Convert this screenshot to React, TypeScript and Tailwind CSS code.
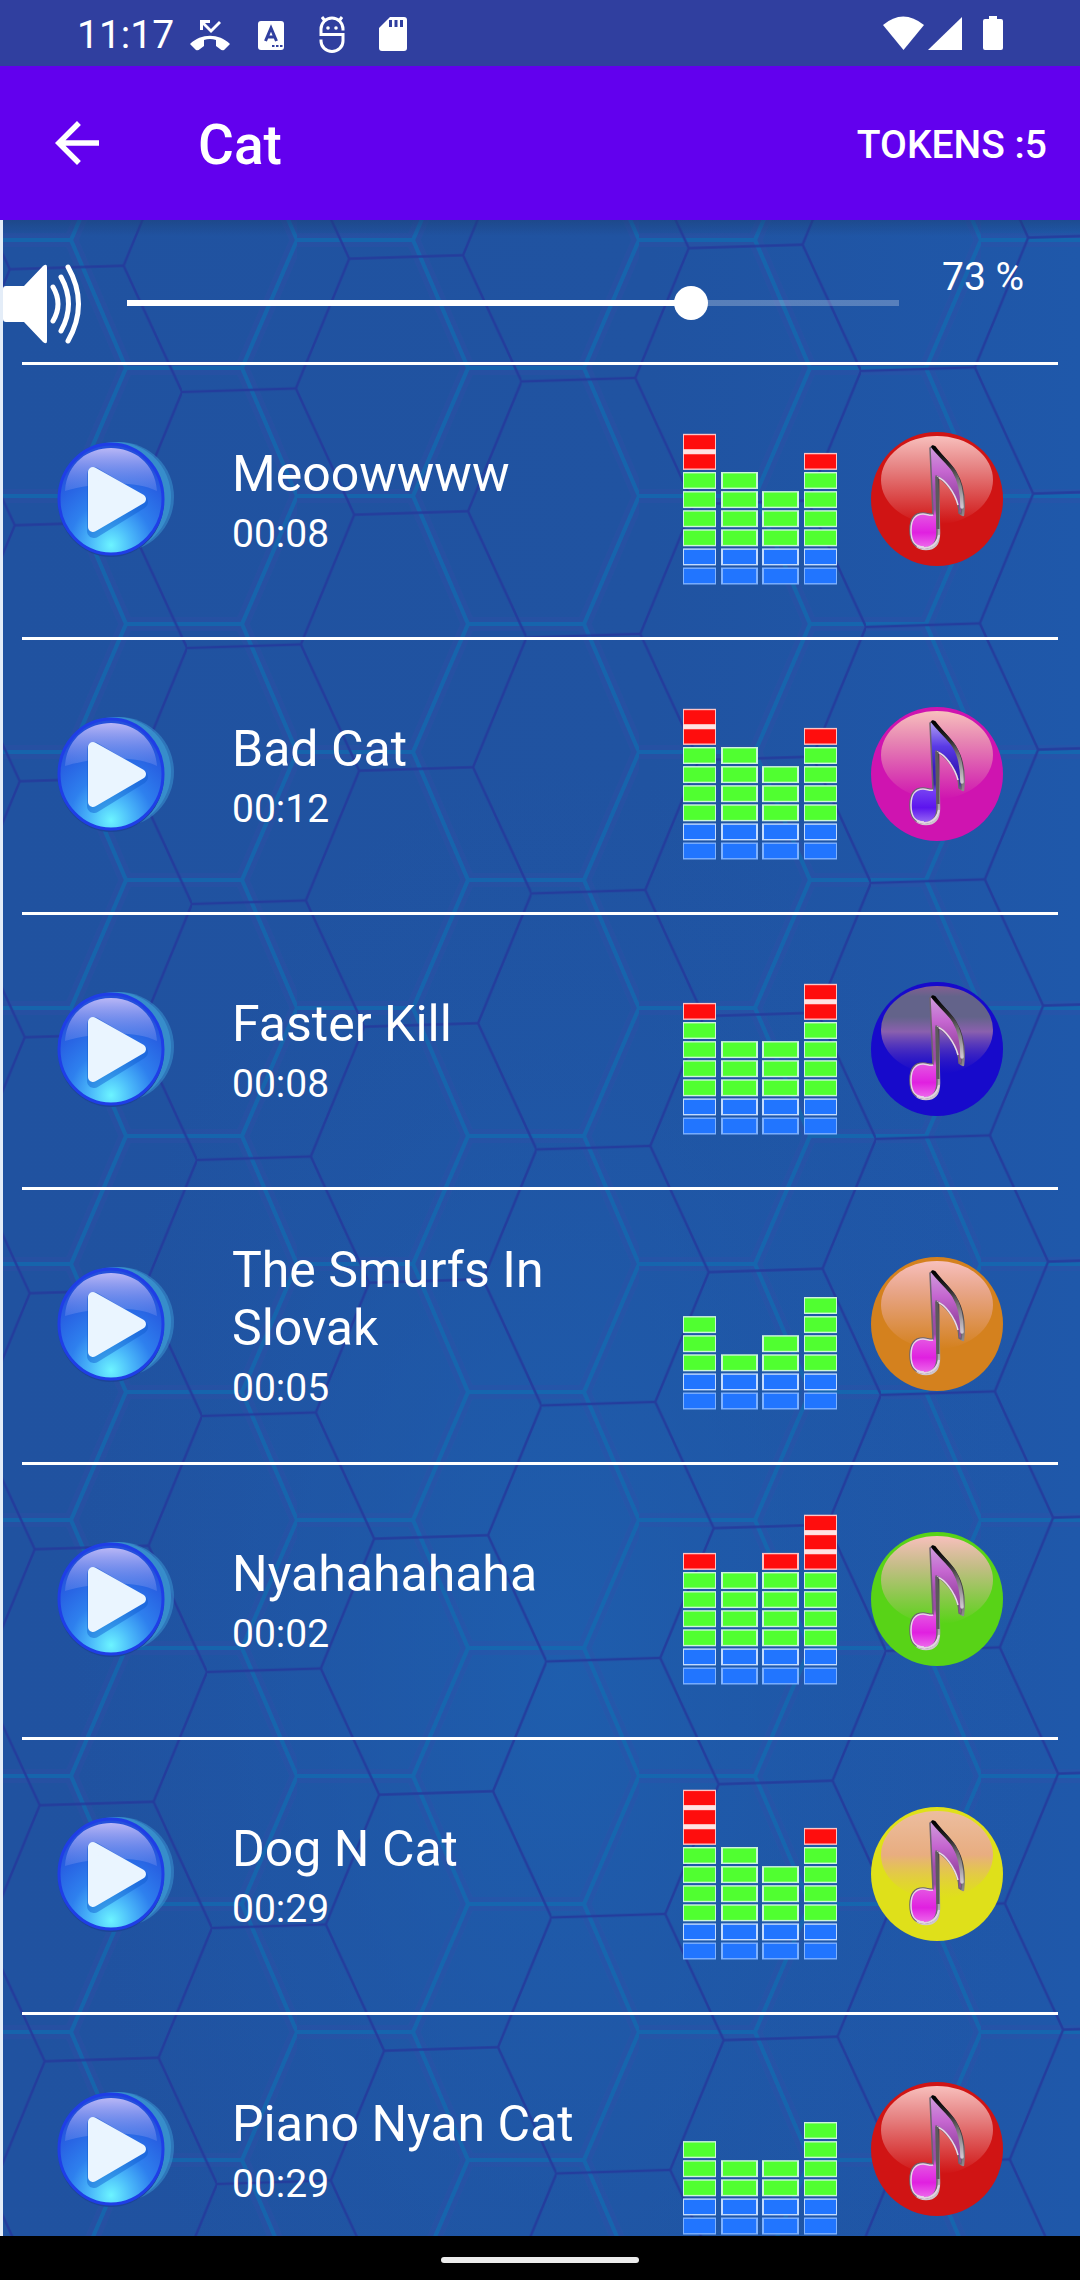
import { useState } from "react";

type Track = {
  id: number;
  name: string;
  time: string;
  // lit cells per column of the equalizer
  levels: number[];
  ball: string;
  gloss: string;
  note: string;
};

const tracks: Track[] = [
  { id: 1, name: "Meoowwww", time: "00:08", levels: [8, 6, 5, 7], ball: "#d01414", gloss: "gloss", note: "pink" },
  { id: 2, name: "Bad Cat", time: "00:12", levels: [8, 6, 5, 7], ball: "#cf14b0", gloss: "gloss", note: "violet" },
  { id: 3, name: "Faster Kill", time: "00:08", levels: [7, 5, 5, 8], ball: "#170acb", gloss: "glossDark", note: "pink" },
  { id: 4, name: "The Smurfs In Slovak", time: "00:05", levels: [5, 3, 4, 6], ball: "#d4811e", gloss: "gloss", note: "pink" },
  { id: 5, name: "Nyahahahaha", time: "00:02", levels: [7, 6, 7, 9], ball: "#58d317", gloss: "gloss", note: "pink" },
  { id: 6, name: "Dog N Cat", time: "00:29", levels: [9, 6, 5, 7], ball: "#dfe01a", gloss: "glossWarm", note: "pink" },
  { id: 7, name: "Piano Nyan Cat", time: "00:29", levels: [5, 4, 4, 6], ball: "#d01414", gloss: "gloss", note: "pink" },
];

// gradients shared by every row
function Gradients() {
  return (
    <svg className="absolute h-0 w-0" aria-hidden="true">
      <defs>
        <linearGradient id="gloss" x1="0" y1="0" x2="0" y2="1">
          <stop offset="0" stopColor="#f8c0bd" />
          <stop offset="0.35" stopColor="#f0b4b4" stopOpacity="0.7" />
          <stop offset="1" stopColor="#f0b4b4" stopOpacity="0" />
        </linearGradient>
        <linearGradient id="glossDark" x1="0" y1="0" x2="0" y2="1">
          <stop offset="0" stopColor="#855f92" />
          <stop offset="0.12" stopColor="#63638a" />
          <stop offset="0.35" stopColor="#63638a" />
          <stop offset="0.52" stopColor="#8a60ae" />
          <stop offset="1" stopColor="#3c20c0" stopOpacity="0" />
        </linearGradient>
        <linearGradient id="glossWarm" x1="0" y1="0" x2="0" y2="1">
          <stop offset="0" stopColor="#ecbd9f" />
          <stop offset="0.5" stopColor="#e8ad80" />
          <stop offset="1" stopColor="#e3c848" stopOpacity="0" />
        </linearGradient>
        <linearGradient id="notePink" x1="0" y1="0" x2="0" y2="1">
          <stop offset="0" stopColor="#cf9fdc" />
          <stop offset="0.25" stopColor="#c566d0" />
          <stop offset="0.45" stopColor="#a04cab" />
          <stop offset="0.62" stopColor="#9a4aa4" />
          <stop offset="0.68" stopColor="#e452e2" />
          <stop offset="0.85" stopColor="#e020e0" />
          <stop offset="1" stopColor="#ee6cec" />
        </linearGradient>
        <linearGradient id="noteViolet" x1="0" y1="0" x2="0" y2="1">
          <stop offset="0" stopColor="#b3a4f2" />
          <stop offset="0.25" stopColor="#5a3ae6" />
          <stop offset="0.45" stopColor="#3a1dc0" />
          <stop offset="0.62" stopColor="#3c22a8" />
          <stop offset="0.68" stopColor="#7540f2" />
          <stop offset="0.85" stopColor="#5c14ee" />
          <stop offset="1" stopColor="#9a6cf4" />
        </linearGradient>
        <linearGradient id="noteEdge" x1="0" y1="0" x2="0" y2="1">
          <stop offset="0" stopColor="#000000" />
          <stop offset="0.3" stopColor="#2c2a2c" />
          <stop offset="0.55" stopColor="#777377" />
          <stop offset="1" stopColor="#d0c8d0" />
        </linearGradient>
        <radialGradient id="playFace" cx="0.5" cy="0.92" r="0.8">
          <stop offset="0" stopColor="#6cf4ff" />
          <stop offset="0.25" stopColor="#4ab8fa" />
          <stop offset="0.5" stopColor="#2e80ee" />
          <stop offset="1" stopColor="#2450dc" />
        </radialGradient>
        <linearGradient id="playShine" x1="0" y1="0" x2="0" y2="1">
          <stop offset="0" stopColor="#b8b6f6" />
          <stop offset="1" stopColor="#6a8cec" stopOpacity="0.4" />
        </linearGradient>
      </defs>
    </svg>
  );
}

function HexBackground() {
  return (
    <svg className="absolute inset-0 h-full w-full" aria-hidden="true">
      <defs>
        <linearGradient id="base" x1="0" y1="0" x2="1" y2="0">
          <stop offset="0" stopColor="#2052a0" />
          <stop offset="0.6" stopColor="#2053a1" />
          <stop offset="1" stopColor="#1f58aa" />
        </linearGradient>
        <radialGradient id="glow" cx="0.52" cy="0.72" r="0.45">
          <stop offset="0" stopColor="#1e60b0" stopOpacity="0.8" />
          <stop offset="1" stopColor="#1e5aac" stopOpacity="0" />
        </radialGradient>
        <pattern id="hexTeal" width="342" height="256" patternUnits="userSpaceOnUse" patternTransform="translate(-45 20)">
          <g fill="none" stroke="#3a48a8" strokeOpacity="0.22" strokeWidth="14">
            <path d="M0 0H116L171 128L116 256H0M171 128H287L342 0M287 128L342 256" />
          </g>
          <g fill="none" stroke="#0b71b2" strokeOpacity="0.6" strokeWidth="4">
            <path d="M0 0H116L171 128L116 256H0M171 128H287L342 0M287 128L342 256" />
          </g>
        </pattern>
        <pattern id="hexNavy" width="340" height="256" patternUnits="userSpaceOnUse" patternTransform="matrix(0.9985 -0.031 0.0195 1 182 172)">
          <g fill="none" stroke="#25399b" strokeOpacity="0.85" strokeWidth="2.5">
            <path d="M0 0H114L170 128L114 256H0M170 128H284L340 0M284 128L340 256" />
          </g>
        </pattern>
        <linearGradient id="barShadow" x1="0" y1="0" x2="0" y2="1">
          <stop offset="0" stopColor="#1c3c70" stopOpacity="0.45" />
          <stop offset="1" stopColor="#1c3c70" stopOpacity="0" />
        </linearGradient>
      </defs>
      <rect width="100%" height="100%" fill="url(#base)" />
      <rect width="100%" height="100%" fill="url(#glow)" />
      <rect width="100%" height="100%" fill="url(#hexTeal)" />
      <rect width="100%" height="100%" fill="url(#hexNavy)" />
      <rect width="100%" height="16" fill="url(#barShadow)" />
      <rect width="3" height="100%" fill="#e4edf8" />
    </svg>
  );
}

function StatusBar() {
  return (
    <div className="flex h-[66px] shrink-0 items-center bg-[#303f9f] pt-1 pr-[76px] pl-[77px] text-white">
      <span className="w-[112px] text-[39px] leading-[46px]">11:17</span>
      {/* missed call */}
      <svg width="42" height="36" viewBox="0 0 42 36" fill="#fff" aria-hidden="true">
        <path d="M11 3h10v3h-5l6 6 8-8 2 2-10 10-8-8v5h-3z" />
        <path d="M1 27C12 16 30 16 41 27L35 33Q33 34 31 32L27 29V23Q21 21 15 23V29L11 32Q9 34 7 33Z" />
      </svg>
      {/* keyboard layout */}
      <svg className="ml-[26px]" width="28" height="36" viewBox="0 0 28 36" aria-hidden="true">
        <rect x="1" y="4" width="26" height="29" rx="3" fill="#fff" />
        <path d="M8.500 24L14 11L19.500 24M10.500 20H17.500" fill="none" stroke="#303f9f" strokeWidth="3" />
        <path d="M15 28h2.500v2h-2.500zM19 28h2.500v2H19zM23 28h2.500v2H23z" fill="#303f9f" />
      </svg>
      {/* android head */}
      <svg className="ml-[33px]" width="28" height="38" viewBox="0 0 28 38" fill="none" stroke="#fff" strokeWidth="3" aria-hidden="true">
        <path d="M4 1L7 5M24 1L21 5M25 14.500V13A11 11 0 0 0 3 13V18.500H25V25A11 10.500 0 0 1 3 25V23.500" />
        <circle cx="10" cy="12" r="1.800" fill="#fff" stroke="none" />
        <circle cx="18" cy="12" r="1.800" fill="#fff" stroke="none" />
      </svg>
      {/* sd card */}
      <svg className="ml-[32px]" width="30" height="38" viewBox="0 0 30 38" aria-hidden="true">
        <path d="M12 1H26Q29 1 29 4V32Q29 35 26 35H4Q1 35 1 32V12Z" fill="#fff" />
        <path d="M11 4h3v7h-3zM16.500 4h3v7h-3zM22 4h3v7h-3z" fill="#303f9f" />
      </svg>
      <svg className="ml-auto" width="122" height="38" viewBox="0 2 122 38" fill="#fff" aria-hidden="true">
        <path d="M1 10Q21 -7 42 10L21.500 35Z" transform="translate(0 1)" />
        <path d="M80 3V36H46Z" />
        <path d="M107 2h8v3h4q2 0 2 2v27q0 2-2 2h-16q-2 0-2-2V7q0-2 2-2h4z" />
      </svg>
    </div>
  );
}

function PlayIcon() {
  return (
    <svg width="120" height="124" viewBox="-55 -60 120 124" aria-hidden="true">
      <ellipse cx="8" cy="-2" rx="55" ry="55" fill="#3a94cf" opacity="0.55" />
      <ellipse cx="5" cy="-2" rx="55" ry="55" fill="#3a94cf" opacity="0.8" />
      <ellipse cx="0" cy="2" rx="53" ry="56" fill="#1d4597" />
      <ellipse cx="0" cy="0" rx="52" ry="55" fill="url(#playFace)" stroke="#1f3ee6" strokeWidth="3" />
      <path d="M-46 -8C-44 -37 -22 -51 0 -51S44 -37 46 -8C22 -20 -20 -16 -46 -8Z" fill="url(#playShine)" />
      <path d="M-17 -25L30 3L-17 32Z" fill="#0f5cd0" stroke="#0f5cd0" strokeWidth="14" strokeLinejoin="round" opacity="0.45" />
      <path d="M-18 -27L30 0L-18 28Z" fill="#eaf5ff" stroke="#eaf5ff" strokeWidth="10" strokeLinejoin="round" />
    </svg>
  );
}

const columns = [
  { x: 1, width: 33, side: 1 },
  { x: 39, width: 37, side: 2 },
  { x: 80, width: 37, side: 2 },
  { x: 122, width: 33, side: 1 },
];

function cellColor(n: number) {
  if (n < 2) return "#2175ff";
  if (n < 6) return "#50ff30";
  return "#ff0d0d";
}

function cellEdge(n: number) {
  if (n < 1) return "#7fb2ff";
  if (n < 2) return "#c3dcff";
  if (n < 6) return "#cdf5dc";
  return "#ffc4c4";
}

function Equalizer({ levels }: { levels: number[] }) {
  return (
    <svg width="156" height="180" viewBox="0 0 156 180" aria-hidden="true">
      {columns.map((col, i) =>
        Array.from({ length: levels[i] }, (_, n) => {
          const y = 156.5 - n * 19.1;
          return (
            <g key={`${i}-${n}`}>
              <rect x={col.x} y={y} width={col.width} height="17" fill={cellEdge(n)} />
              <rect
                x={col.x + col.side}
                y={y + 1.4}
                width={col.width - col.side * 2}
                height="14.200"
                fill={cellColor(n)}
              />
              {n > 6 && <rect x={col.x} y={y + 15.6} width={col.width} height="4.500" fill="#ffe3e3" />}
            </g>
          );
        })
      )}
    </svg>
  );
}

const notePath =
  "M-7 -51L-4.500 -53C2 -44 11 -36 16 -28C23 -17 26 -2 24 15L22 14C22 5 19 -3 12 -12C7 -18 3 -22 -1 -23L0 33C0 44 -5 49 -13 49C-23 49 -27 43 -27 31C-27 19 -22 14 -14 14C-10 14 -7 16 -4 15Z";

function NoteBall({ ball, gloss, note }: { ball: string; gloss: string; note: string }) {
  return (
    <svg width="134" height="138" viewBox="-67 -67 134 138" aria-hidden="true">
      <ellipse cx="0" cy="0" rx="66" ry="67" fill={ball} />
      <ellipse cx="0" cy="-19" rx="56" ry="44" fill={`url(#${gloss})`} />
      <path d={notePath} transform="translate(2 1)" fill="url(#noteEdge)" stroke="url(#noteEdge)" strokeWidth="2.500" strokeLinejoin="round" />
      <path
        d={notePath}
        fill={note === "violet" ? "url(#noteViolet)" : "url(#notePink)"}
        stroke="#6d6470"
        strokeWidth="1.500"
        strokeLinejoin="round"
      />
      <path d="M-4 16C-7 17 -10 15 -14 15C-21 15 -26 20 -26 31C-26 43 -22 48 -13 48" fill="none" stroke="#e6d6e6" strokeWidth="1.500" />
      <path d="M-20 47C-12 51 -1 49 2 36" fill="none" stroke="#e3d4e3" strokeWidth="2" />
      <path d="M-4 -52C2 -44 12 -36 17 -28C23 -18 25 -8 25 8" fill="none" stroke="url(#noteEdge)" strokeWidth="3.500" strokeLinecap="round" />
      <path d="M0 -22C8 -20 18 -6 21 6" fill="none" stroke="#ead9ea" strokeWidth="1.500" />
      <path d="M0 -22L1 30" stroke="#5d595d" strokeWidth="3" />
    </svg>
  );
}

function VolumeBar() {
  const [volume, setVolume] = useState(73);

  return (
    <div className="flex h-[142px] items-center">
      <svg className="mt-[26px] shrink-0" width="84" height="84" viewBox="0 0 84 84" aria-hidden="true">
        <path d="M6 24H24L43 4Q47 1 47 5V79Q47 83 43 80L24 60H6Q3 60 3 57V27Q3 24 6 24Z" fill="#fff" />
        <path d="M53 25Q63 42 53 59M61 15Q76 42 61 69M68 5Q89 42 68 79" fill="none" stroke="#fff" strokeWidth="5" strokeLinecap="round" />
      </svg>
      <input
        type="range"
        aria-label="Volume"
        min={0}
        max={100}
        value={volume}
        onChange={(e) => setVolume(Number(e.target.value))}
        className="mt-[24px] ml-[26px] h-[36px] min-w-0 flex-1 appearance-none bg-[length:100%_6px] bg-center bg-no-repeat [&::-webkit-slider-thumb]:h-[34px] [&::-webkit-slider-thumb]:w-[34px] [&::-webkit-slider-thumb]:appearance-none [&::-webkit-slider-thumb]:rounded-full [&::-webkit-slider-thumb]:bg-white"
        style={{
          backgroundImage: `linear-gradient(to right, transparent 17px, #fff 17px, #fff ${volume}%, #ffffff40 ${volume}%, #ffffff40 calc(100% - 17px), transparent calc(100% - 17px))`,
        }}
      />
      <span className="mb-7 ml-[26px] w-[138px] text-[39px] leading-[46px]">{volume} %</span>
    </div>
  );
}

export default function App() {
  return (
    <div className="flex h-screen flex-col bg-black font-[Roboto,sans-serif] text-white">
      <Gradients />
      <StatusBar />
      <header className="flex h-[154px] shrink-0 items-center bg-[#6200ee] pr-[33px] pl-[44px]">
        <button aria-label="Back" className="h-[66px] w-[66px]">
          <svg width="66" height="66" viewBox="0 0 24 24" fill="#fff" aria-hidden="true">
            <path d="M20 11H7.830l5.590-5.590L12 4l-8 8 8 8 1.410-1.410L7.830 13H20v-2z" />
          </svg>
        </button>
        <h1 className="mt-1 ml-[88px] text-[55px] leading-[64px] font-medium">Cat</h1>
        <button className="mt-1 ml-auto text-[39px] leading-[46px] font-medium">TOKENS :5</button>
      </header>
      <main className="relative min-h-0 flex-1 overflow-hidden">
        <HexBackground />
        <div className="relative flex h-full flex-col">
          <VolumeBar />
          <ul className="mx-[22px] min-h-0 flex-1 overflow-y-auto [scrollbar-width:none]">
            {tracks.map((track) => {
              const { id, name, time, levels, ball, gloss, note } = track;
              return (
                <li key={id} className="flex h-[275px] items-center border-t-[3px] border-white pr-[54px] pl-[34px]">
                  <button aria-label={`Play ${name}`} className="shrink-0">
                    <PlayIcon />
                  </button>
                  <div className="ml-14 min-w-0 flex-1 pr-6">
                    <h2 className="text-[50px] leading-[58px]">{name}</h2>
                    <p className="mt-2 text-[39px] leading-[46px]">{time}</p>
                  </div>
                  <Equalizer levels={levels} />
                  <button aria-label={`Set ${name} as ringtone`} className="ml-8 shrink-0">
                    <NoteBall ball={ball} gloss={gloss} note={note} />
                  </button>
                </li>
              );
            })}
          </ul>
        </div>
      </main>
      <div className="flex h-11 shrink-0 items-center justify-center bg-black">
        <div className="mt-1 h-[6px] w-[198px] rounded-full bg-[#ececec]" />
      </div>
    </div>
  );
}
